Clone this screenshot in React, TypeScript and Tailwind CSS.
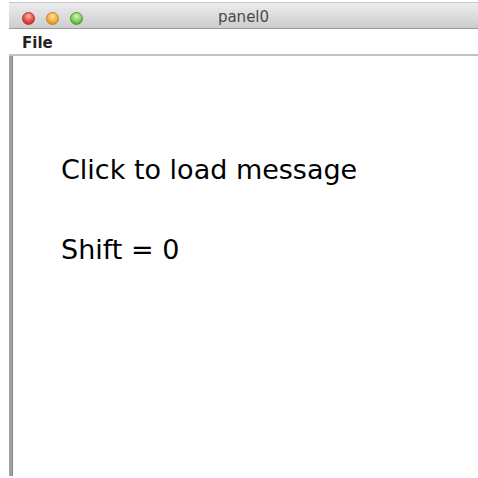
export default function App() {
  return (
    <div className="w-[478px] h-[478px] bg-white overflow-hidden" style={{ fontFamily: '"DejaVu Sans", sans-serif' }}>
      <div className="ml-[9px] w-[469px] h-[476px] flex flex-col">
        {/* title bar */}
        <div className="mt-[2px] h-[27px] relative flex items-center justify-center border-t border-[#c8c8c8] border-b border-b-[#9a9a9a] bg-gradient-to-b from-[#ececec] to-[#cdcdcd]">
          <div className="absolute left-[13px] top-[9px] flex gap-[11px]">
            <span className="w-[13px] h-[13px] rounded-full border border-[#b53030] bg-[radial-gradient(circle_at_50%_30%,#ffb0a8,#e0443a_60%,#b62620)]" />
            <span className="w-[13px] h-[13px] rounded-full border border-[#c08420] bg-[radial-gradient(circle_at_50%_30%,#ffe4a0,#f2a82c_60%,#c37c14)]" />
            <span className="w-[13px] h-[13px] rounded-full border border-[#4e9a30] bg-[radial-gradient(circle_at_50%_30%,#d8f8b8,#78c850_60%,#3d8f24)]" />
          </div>
          <span className="mt-[4px] text-[15px] text-[#4a4a4a] leading-none">panel0</span>
        </div>
        {/* menu bar */}
        <div className="h-[27px] flex items-end pb-[3px] bg-white border-b-2 border-[#c2c2c2] pl-[13px]">
          <span className="text-[15px] font-semibold text-[#222] leading-none">File</span>
        </div>
        {/* content */}
        <div className="flex-1 flex">
          <div className="w-[4px] bg-[#a0a0a0] border-r border-[#888]" />
          <div className="flex-1 pl-[48px] pt-[98px] flex flex-col gap-[48px] text-black">
            <div className="text-[27px] leading-[32px]">Click to load message</div>
            <div className="text-[27px] leading-[32px]">Shift = 0</div>
          </div>
        </div>
      </div>
    </div>
  );
}
